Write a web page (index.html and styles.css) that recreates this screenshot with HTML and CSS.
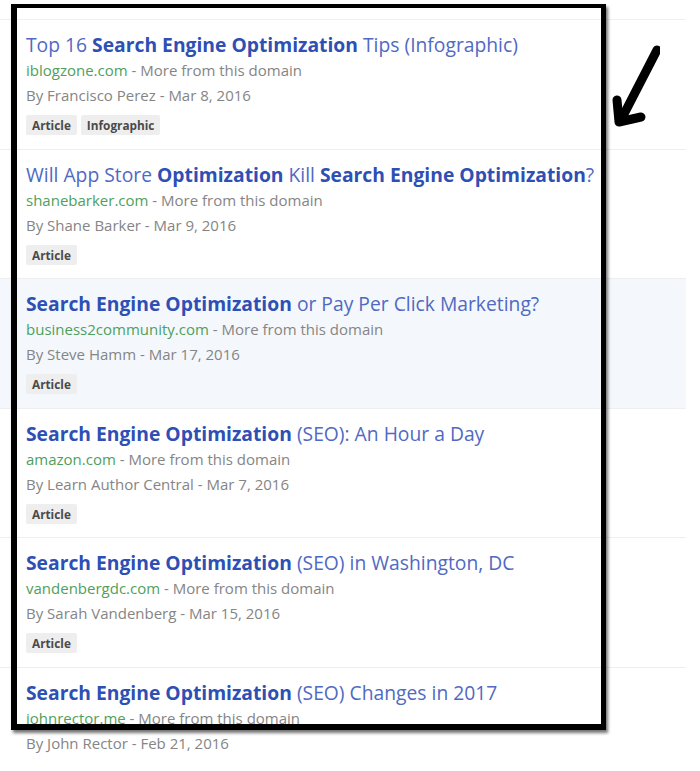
FILE: index.html
```html
<!DOCTYPE html>
<html>
<head>
<meta charset="utf-8">
<link rel="stylesheet" href="styles.css">
</head>
<body>
<div class="page">
  <ul class="results">
    <li class="result">
      <div class="title">Top 16 <b>Search Engine Optimization</b> Tips (Infographic)</div>
      <div class="meta"><span class="domain">iblogzone.com</span> - More from this domain</div>
      <div class="meta">By Francisco Perez - Mar 8, 2016</div>
      <div class="tags"><span class="tag">Article</span><span class="tag">Infographic</span></div>
    </li>
    <li class="result">
      <div class="title">Will App Store <b>Optimization</b> Kill <b>Search Engine Optimization</b>?</div>
      <div class="meta"><span class="domain">shanebarker.com</span> - More from this domain</div>
      <div class="meta">By Shane Barker - Mar 9, 2016</div>
      <div class="tags"><span class="tag">Article</span></div>
    </li>
    <li class="result active">
      <div class="title"><b>Search Engine Optimization</b> or Pay Per Click Marketing?</div>
      <div class="meta"><span class="domain">business2community.com</span> - More from this domain</div>
      <div class="meta">By Steve Hamm - Mar 17, 2016</div>
      <div class="tags"><span class="tag">Article</span></div>
    </li>
    <li class="result">
      <div class="title"><b>Search Engine Optimization</b> (SEO): An Hour a Day</div>
      <div class="meta"><span class="domain">amazon.com</span> - More from this domain</div>
      <div class="meta">By Learn Author Central - Mar 7, 2016</div>
      <div class="tags"><span class="tag">Article</span></div>
    </li>
    <li class="result">
      <div class="title"><b>Search Engine Optimization</b> (SEO) in Washington, DC</div>
      <div class="meta"><span class="domain">vandenbergdc.com</span> - More from this domain</div>
      <div class="meta">By Sarah Vandenberg - Mar 15, 2016</div>
      <div class="tags"><span class="tag">Article</span></div>
    </li>
    <li class="result">
      <div class="title"><b>Search Engine Optimization</b> (SEO) Changes in 2017</div>
      <div class="meta"><span class="domain">johnrector.me</span> - More from this domain</div>
      <div class="meta">By John Rector - Feb 21, 2016</div>
    </li>
  </ul>
  <div class="highlight-box"></div>
  <svg class="arrow" width="60" height="100" viewBox="600 40 60 100">
    <path d="M657 50 L623 116" fill="none" stroke="#000" stroke-width="9" stroke-linecap="round"/>
    <path d="M617 100 L619 122 L641 117" fill="none" stroke="#000" stroke-width="9" stroke-linecap="round" stroke-linejoin="round"/>
  </svg>
</div>
</body>
</html>
```

FILE: styles.css
```css
html, body {
  margin: 0;
  padding: 0;
  background: #fff;
}

body {
  font-family: "Open Sans", "Liberation Sans", sans-serif;
  overflow: hidden;
  height: 771px;
}

.page {
  position: relative;
  width: 700px;
  height: 752px;
  padding-top: 19px;
}

.results {
  list-style: none;
  margin: 0;
  padding: 0;
  width: 686px;
  border-top: 1px solid #f0f0f0;
}

.result {
  padding: 12px 0 13.6px 26px;
  border-bottom: 1px solid #eeeeee;
}

.result:last-child {
  border-bottom: none;
}

.result.active {
  background: #f4f8fc;
}

.title {
  font-size: 19.3px;
  line-height: 26px;
  color: #5069c3;
  white-space: nowrap;
}

.title b {
  font-weight: 700;
  color: #2e4fb4;
}

.meta {
  font-size: 15px;
  line-height: 25px;
  color: #858585;
  white-space: nowrap;
}

.domain {
  color: #4fa05c;
}

.tags {
  display: flex;
  gap: 4px;
  margin-top: 7px;
  height: 20px;
}

.tag {
  display: inline-flex;
  align-items: center;
  padding: 0 6px;
  height: 20px;
  background: #eeeeee;
  border-radius: 2px;
  font-size: 11.8px;
  font-weight: 700;
  color: #4a4a4a;
}

.highlight-box {
  position: absolute;
  left: 11px;
  top: 4px;
  width: 584px;
  height: 716px;
  border-style: solid;
  border-color: #000;
  border-width: 4px 5px 6px 6px;
  box-shadow: 2px 3px 3px rgba(0, 0, 0, 0.55);
}

.arrow {
  position: absolute;
  left: 600px;
  top: 40px;
}
```
